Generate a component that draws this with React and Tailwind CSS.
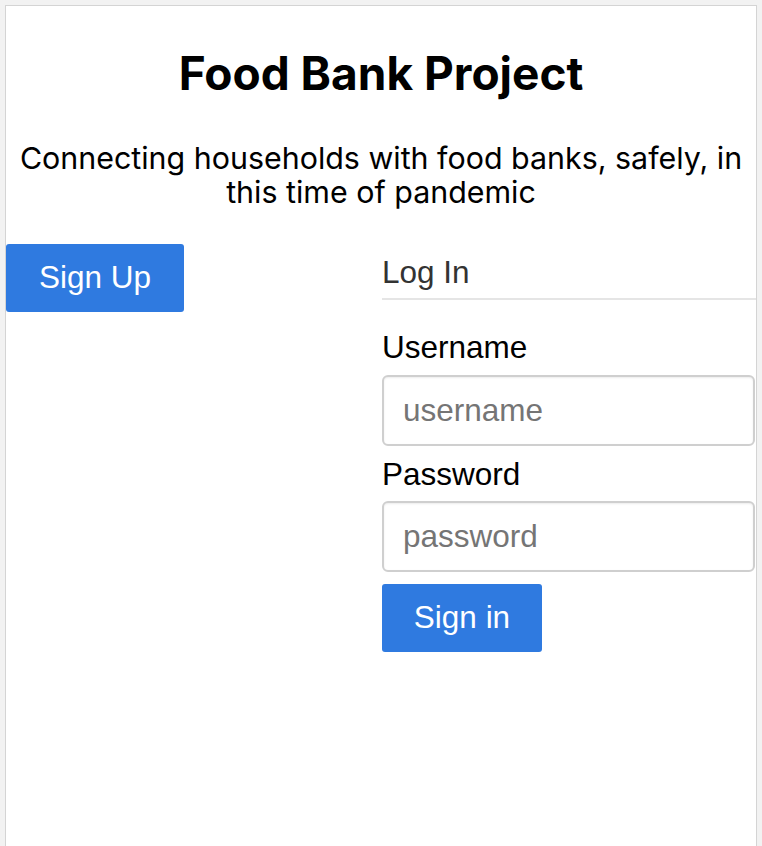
export default function App() {
  const helv = { fontFamily: '"Liberation Sans", Arial, sans-serif' };
  return (
    <div className="min-h-screen bg-[#f2f2f2] px-[5px] pt-[5px]">
      <div className="min-h-[900px] border border-[#d4d4d4] bg-white">
        <h1
          className="mt-[44px] text-center text-[46px] font-bold leading-none text-black"
          style={{ fontFamily: 'Inter, sans-serif' }}
        >
          Food Bank Project
        </h1>
        <p
          className="mt-[45px] text-center text-[30.4px] leading-[34px] text-black"
          style={{ fontFamily: 'Inter, sans-serif' }}
        >
          Connecting households with food banks, safely, in this time of pandemic
        </p>
        <div className="mt-[35px] grid grid-cols-2" style={helv}>
          <div>
            <button className="h-[68px] w-[178px] rounded-[3px] bg-[#2f7ae0] text-[31.5px] text-white">
              Sign Up
            </button>
          </div>
          <div className="pl-[1px]">
            <div className="border-b-2 border-[#e5e5e5] pb-[8px] pt-[10px] text-[31.5px] leading-[36px] text-[#333]">
              Log In
            </div>
            <div className="mt-[29px] text-[31.5px] leading-[36px] text-black">Username</div>
            <input
              placeholder="username"
              className="mt-[10px] block h-[71px] w-[373px] rounded-[6px] border-2 border-[#cfcfcf] bg-white pl-[19px] text-[31.5px] shadow-[inset_0_1px_2px_rgba(0,0,0,0.08)] placeholder:text-[#757575]"
            />
            <div className="mt-[10px] text-[31.5px] leading-[36px] text-black">Password</div>
            <input
              placeholder="password"
              className="mt-[9px] block h-[71px] w-[373px] rounded-[6px] border-2 border-[#cfcfcf] bg-white pl-[19px] text-[31.5px] shadow-[inset_0_1px_2px_rgba(0,0,0,0.08)] placeholder:text-[#757575]"
            />
            <button className="mt-[12px] h-[68px] w-[160px] rounded-[3px] bg-[#2f7ae0] text-[31.5px] text-white">
              Sign in
            </button>
          </div>
        </div>
      </div>
    </div>
  );
}
